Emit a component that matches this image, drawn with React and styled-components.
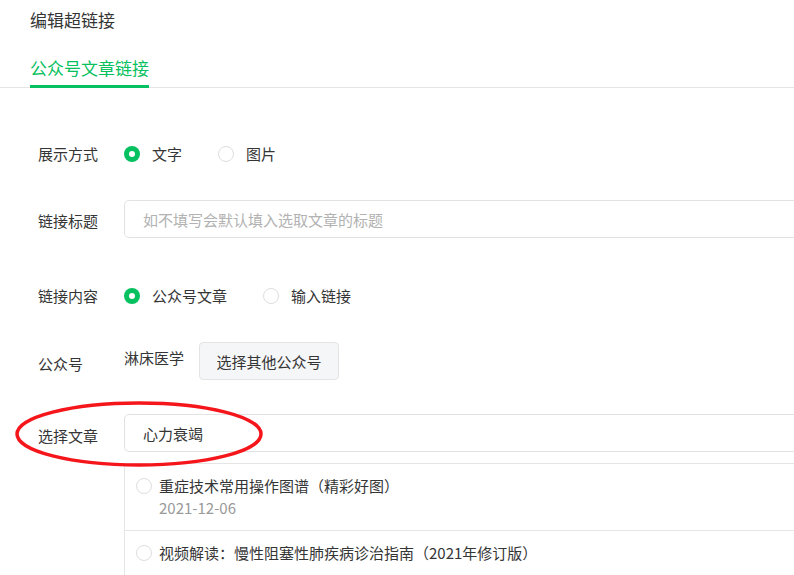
import React from "react";
import styled, { createGlobalStyle } from "styled-components";

const GlobalStyle = createGlobalStyle`
  html, body {
    margin: 0;
    padding: 0;
    background: #fff;
    overflow: hidden;
  }
  body {
    font-family: "Noto Sans CJK SC", "Noto Sans", sans-serif;
    color: #353535;
  }
`;

const Page = styled.div`
  position: relative;
  width: 794px;
  height: 575px;
  overflow: hidden;
`;

const Title = styled.div`
  padding: 7px 0 0 30px;
  font-size: 17px;
  line-height: 26px;
  color: #353535;
`;

const TabBar = styled.div`
  display: flex;
  margin-top: 22px;
  padding-left: 30px;
  border-bottom: 1px solid #e5e5e5;
`;

const Tab = styled.div`
  font-size: 17px;
  line-height: 26px;
  padding-bottom: 4px;
  color: #07c160;
  border-bottom: 3px solid #07c160;
  margin-bottom: -1px;
`;

const Form = styled.div`
  padding: 47px 0 0 38px;
`;

const Row = styled.div`
  display: flex;
  align-items: center;
  height: 38px;
  margin-top: ${(p) => p.$gap || 0}px;
`;

const Label = styled.div`
  width: 86px;
  flex-shrink: 0;
  font-size: 15px;
  line-height: 22px;
  color: #353535;
  padding-top: ${(p) => p.$shift || 0}px;
`;

const RadioGroup = styled.div`
  display: flex;
  align-items: center;
  gap: 36px;
`;

const RadioOption = styled.label`
  display: flex;
  align-items: center;
  gap: 12px;
  font-size: 15px;
  line-height: 22px;
  color: #353535;
`;

const RadioDot = styled.span`
  box-sizing: border-box;
  width: 16px;
  height: 16px;
  border-radius: 50%;
  flex-shrink: 0;
  border: ${(p) => (p.$checked ? "none" : "1px solid #dedede")};
  background: ${(p) => (p.$checked ? "#07c160" : "#fff")};
  display: flex;
  align-items: center;
  justify-content: center;

  &::after {
    content: "";
    display: ${(p) => (p.$checked ? "block" : "none")};
    width: 6px;
    height: 6px;
    border-radius: 50%;
    background: #fff;
  }
`;

const TextInput = styled.div`
  box-sizing: border-box;
  width: 720px;
  height: 38px;
  border: 1px solid #e2e2e2;
  border-radius: 5px;
  padding-left: 18px;
  display: flex;
  align-items: center;
  font-size: 15px;
  color: ${(p) => (p.$placeholder ? "#b2b2b2" : "#353535")};
  flex-shrink: 0;
`;

const Account = styled.span`
  font-size: 15px;
  line-height: 22px;
  color: #353535;
  margin-right: 15px;
  padding-bottom: 6px;
`;

const Button = styled.button`
  box-sizing: border-box;
  height: 38px;
  width: 140px;
  border: 1px solid #e4e4e4;
  border-radius: 4px;
  background: #f5f6f7;
  font-family: inherit;
  font-size: 15px;
  color: #353535;
  padding: 0;
`;

const ResultList = styled.div`
  margin: 11px 0 0 86px;
  width: 720px;
  border-left: 1px solid #e5e5e5;
  border-top: 1px solid #e5e5e5;
`;

const ResultItem = styled.div`
  display: flex;
  align-items: flex-start;
  gap: 7px;
  padding: 11px 0 11px 11px;
  border-bottom: 1px solid #e5e5e5;

  ${RadioDot} {
    margin-top: 3px;
  }
`;

const ItemText = styled.div`
  display: flex;
  flex-direction: column;
`;

const ItemTitle = styled.div`
  font-size: 15px;
  line-height: 22px;
  color: #353535;
`;

const ItemDate = styled.div`
  font-size: 15px;
  line-height: 22px;
  color: #999;
`;

const Mark = styled.svg`
  position: absolute;
  left: 0;
  top: 0;
  pointer-events: none;
`;

const articles = [
  { title: "重症技术常用操作图谱（精彩好图）", date: "2021-12-06" },
  { title: "视频解读：慢性阻塞性肺疾病诊治指南（2021年修订版）" },
];

export default function App() {
  return (
    <Page>
      <GlobalStyle />
      <Title>编辑超链接</Title>
      <TabBar>
        <Tab>公众号文章链接</Tab>
      </TabBar>

      <Form>
        <Row>
          <Label>展示方式</Label>
          <RadioGroup>
            <RadioOption>
              <RadioDot $checked />
              文字
            </RadioOption>
            <RadioOption>
              <RadioDot />
              图片
            </RadioOption>
          </RadioGroup>
        </Row>

        <Row $gap={27}>
          <Label $shift={4}>链接标题</Label>
          <TextInput $placeholder>如不填写会默认填入选取文章的标题</TextInput>
        </Row>

        <Row $gap={39}>
          <Label>链接内容</Label>
          <RadioGroup>
            <RadioOption>
              <RadioDot $checked />
              公众号文章
            </RadioOption>
            <RadioOption>
              <RadioDot />
              输入链接
            </RadioOption>
          </RadioGroup>
        </Row>

        <Row $gap={27}>
          <Label $shift={6}>公众号</Label>
          <Account>淋床医学</Account>
          <Button>选择其他公众号</Button>
        </Row>

        <Row $gap={34}>
          <Label $shift={6}>选择文章</Label>
          <TextInput>心力衰竭</TextInput>
        </Row>

        <ResultList>
          {articles.map((a) => (
            <ResultItem key={a.title}>
              <RadioDot />
              <ItemText>
                <ItemTitle>{a.title}</ItemTitle>
                {a.date && <ItemDate>{a.date}</ItemDate>}
              </ItemText>
            </ResultItem>
          ))}
        </ResultList>
      </Form>

      <Mark width="794" height="575" viewBox="0 0 794 575">
        <ellipse
          cx="139"
          cy="434"
          rx="122"
          ry="31"
          fill="none"
          stroke="#f5161b"
          strokeWidth="3.5"
        />
      </Mark>
    </Page>
  );
}
